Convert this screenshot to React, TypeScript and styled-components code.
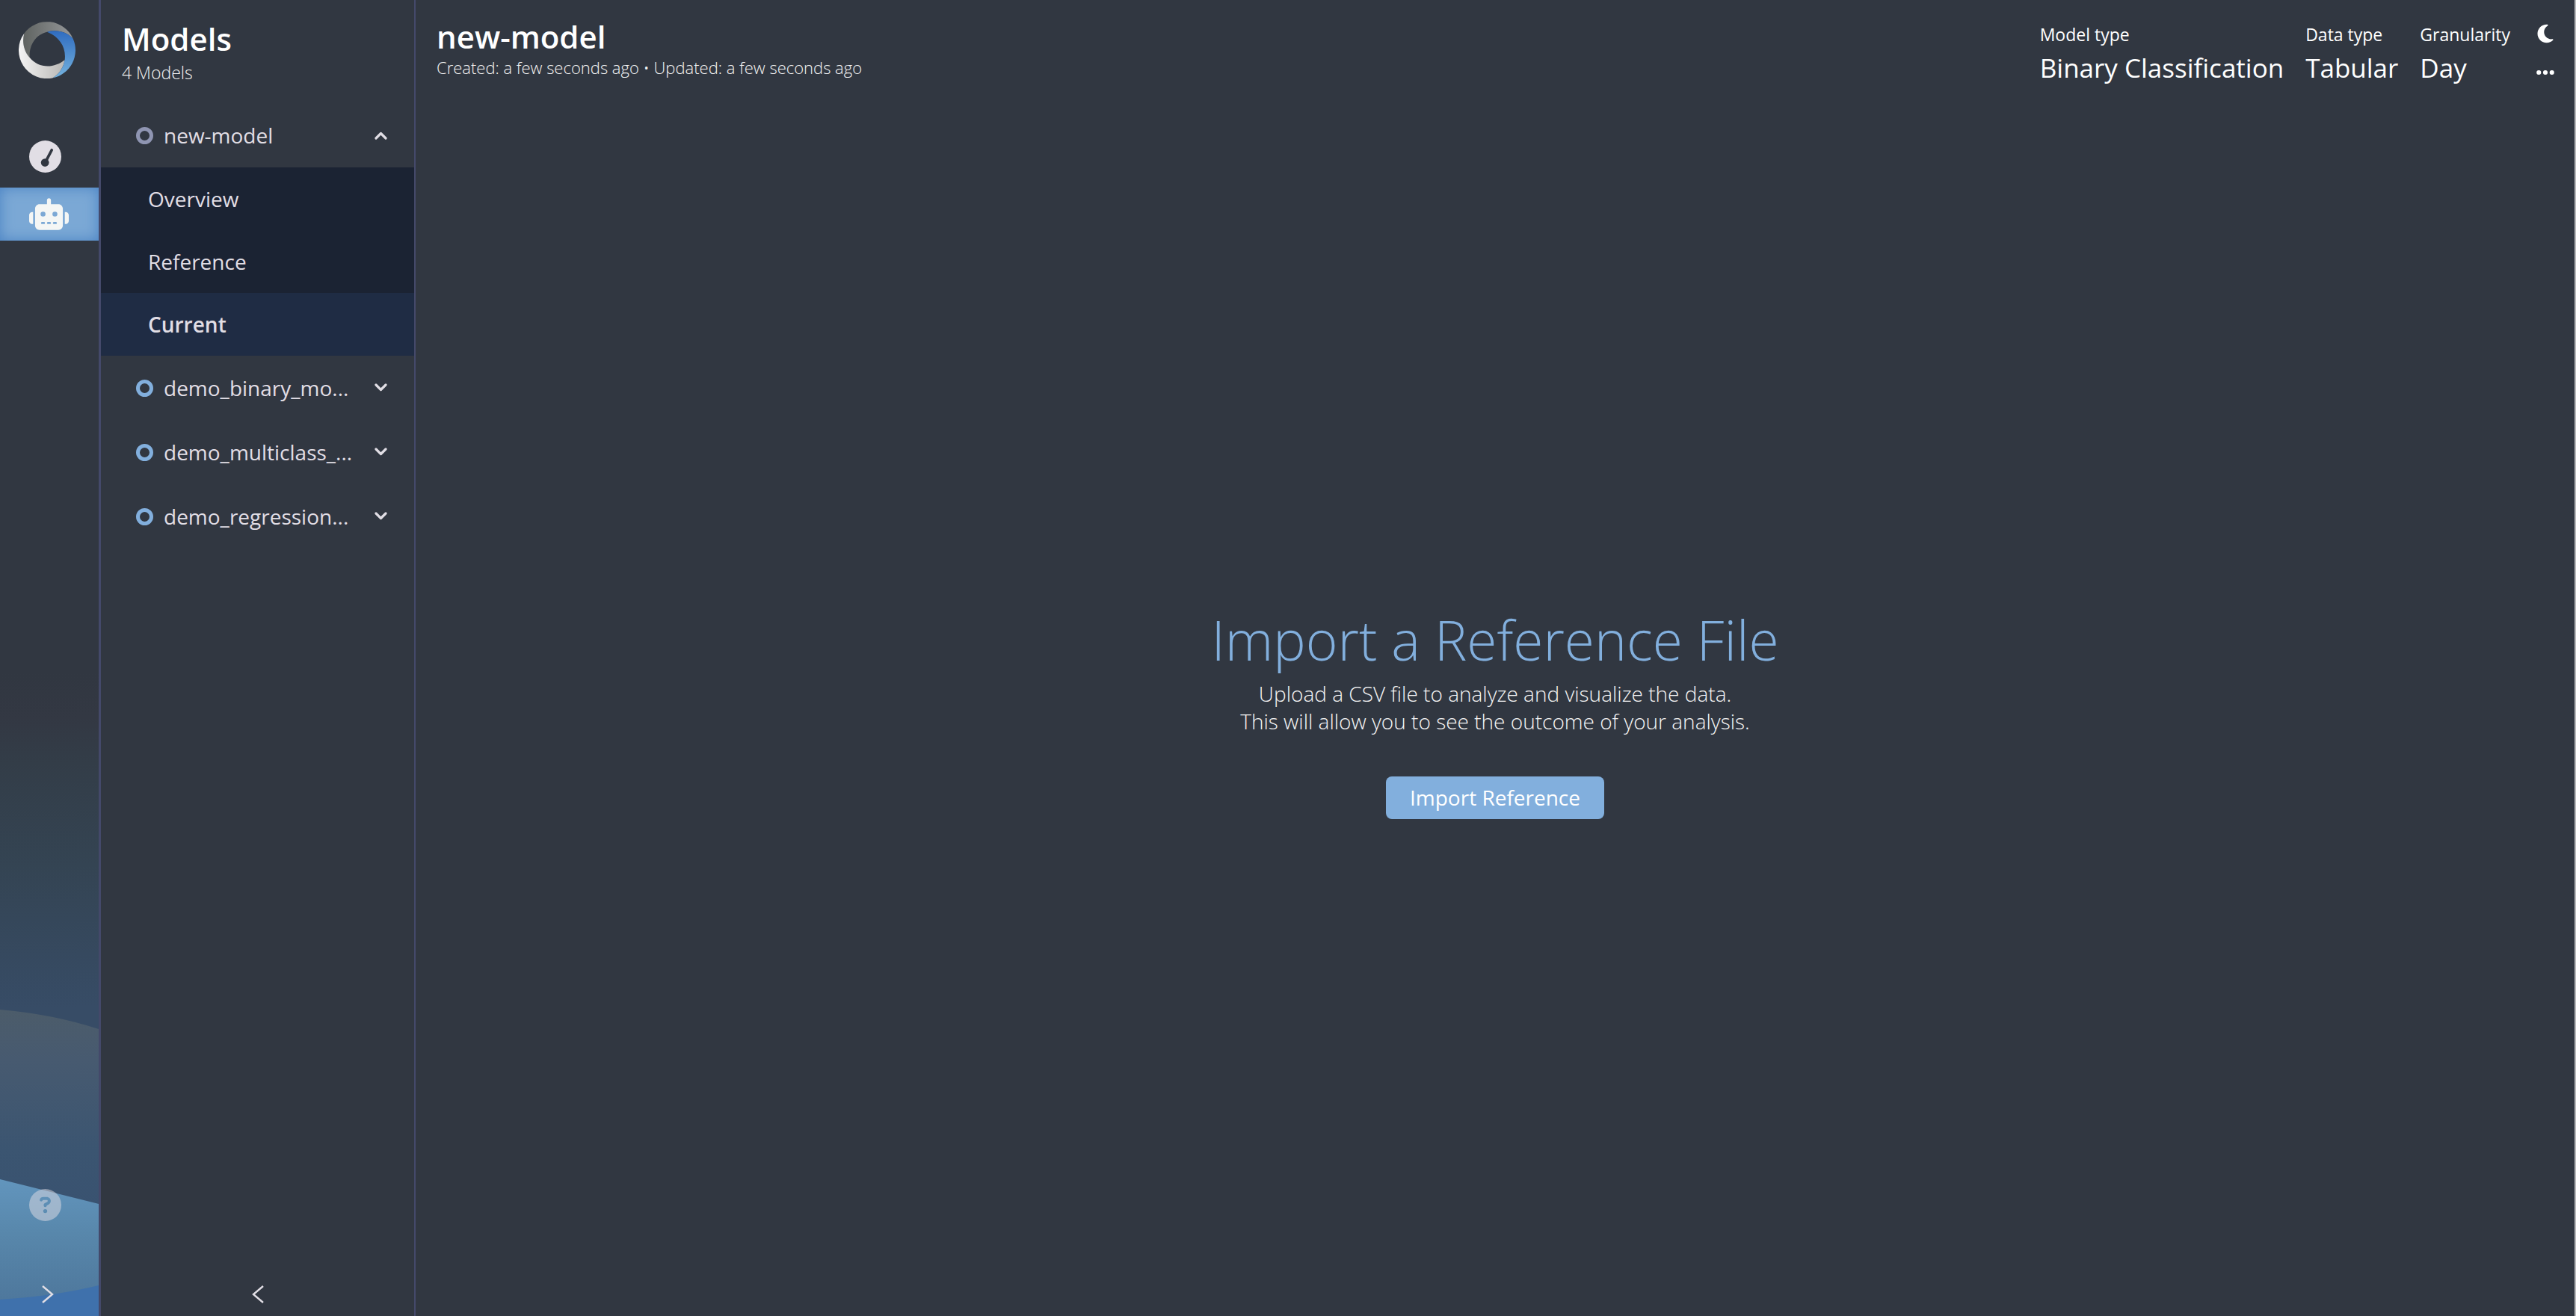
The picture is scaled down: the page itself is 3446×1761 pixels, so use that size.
import React, { useState } from 'react';
import styled, { createGlobalStyle } from 'styled-components';
import { FaCircleQuestion, FaEllipsis, FaMoon, FaRobot } from 'react-icons/fa6';

const color = {
  page: '#313741',
  line: '#44496a',
  submenu: '#1b2333',
  selected: '#1f2c44',
  accent: '#82afdd',
  text: '#e1dee5',
  soft: '#f4f4f4',
  muted: '#8f95b2',
  white: '#ffffff',
};

const GlobalStyle = createGlobalStyle`
  *, *::before, *::after { box-sizing: border-box; }
  body {
    margin: 0;
    background: ${color.page};
    color: ${color.text};
    font-family: "Open Sans", "Noto Sans", sans-serif;
    font-size: 28px;
    line-height: 37px;
  }
  h1, h2, p, ul, dl, dd { margin: 0; padding: 0; }
  ul { list-style: none; }
  button { font: inherit; color: inherit; background: none; border: 0; padding: 0; cursor: pointer; }
  a { color: inherit; text-decoration: none; }
  svg { display: block; }
`;

const Layout = styled.div`
  display: flex;
  min-height: 100vh;
  border-right: 2px solid #b9babc;
`;

const Rail = styled.nav`
  position: relative;
  isolation: isolate;
  display: flex;
  flex-direction: column;
  flex: none;
  width: 135px;
  border-right: 3px solid ${color.line};
`;

const RailArt = styled.svg`
  position: absolute;
  z-index: -1;
  left: 0;
  bottom: 0;
  width: 100%;
  height: 861px;
`;

const LogoLink = styled.a`
  padding: 29px 25px 0;
  height: 174px;
`;

const RailLink = styled.a<{ $active?: boolean; $dim?: boolean }>`
  display: flex;
  align-items: center;
  height: 71px;
  padding-left: 39px;
  color: ${(p) => (p.$active ? '#f4f6f5' : color.text)};
  background: ${(p) => (p.$active ? '#7ba8d5' : 'transparent')};
  box-shadow: ${(p) => (p.$active ? 'inset 0 0 18px #4a83c4' : 'none')};
  > svg { opacity: ${(p) => (p.$dim ? 0.5 : 1)}; }
`;

const RobotIcon = styled(FaRobot)`
  width: 53px;
  height: 43px;
`;

const RailLinks = styled.div`
  display: flex;
  flex-direction: column;
  gap: 6px;
`;

const RailBottom = styled.div`
  display: flex;
  flex-direction: column;
  gap: 55px;
  margin-top: auto;
`;

const CollapseButton = styled.button`
  display: flex;
  justify-content: center;
  align-items: center;
  height: 58px;
  width: 100%;
  color: ${color.text};
`;

const RailToggle = styled(CollapseButton)`
  padding-right: 4px;
`;

const Sidebar = styled.aside`
  display: flex;
  flex-direction: column;
  flex: none;
  width: 421px;
  border-right: 2px solid ${color.line};
`;

const SidebarHead = styled.header`
  height: 138px;
  padding: 26px 28px 0;
`;

const Title = styled.h2`
  font-size: 42px;
  font-weight: 600;
  line-height: 52px;
  color: ${color.white};
`;

const Count = styled.p`
  font-size: 23px;
  font-weight: 300;
  line-height: 38px;
  color: ${color.soft};
`;

const ModelRow = styled.button`
  display: flex;
  align-items: center;
  width: 100%;
  height: 86px;
  padding: 0 36px 0 47px;
  text-align: left;
`;

const Ring = styled.span<{ $muted?: boolean }>`
  flex: none;
  width: 23px;
  height: 23px;
  margin-right: 14px;
  border: 5px solid ${(p) => (p.$muted ? color.muted : color.accent)};
  border-radius: 50%;
`;

const ModelName = styled.span`
  flex: 1;
  white-space: nowrap;
`;

const SubLink = styled.a<{ $selected?: boolean }>`
  display: flex;
  align-items: center;
  height: 84px;
  padding-left: 63px;
  background: ${(p) => (p.$selected ? color.selected : color.submenu)};
  font-weight: ${(p) => (p.$selected ? 600 : 400)};
`;

const SidebarFoot = styled.footer`
  margin-top: auto;
`;

const Main = styled.main`
  display: flex;
  flex-direction: column;
  flex: 1;
  min-width: 0;
`;

const TopBar = styled.header`
  display: flex;
  justify-content: space-between;
  height: 146px;
  padding: 23px 25px 0 28px;
`;

const Dates = styled.p`
  font-size: 22px;
  font-weight: 300;
  line-height: 30px;
  color: ${color.soft};
`;

const Summary = styled.div`
  display: flex;
  gap: 33px;
  padding-top: 7px;
  color: ${color.white};
`;

const Facts = styled.dl`
  display: flex;
  gap: 29px;
`;

const Label = styled.dt`
  font-size: 23px;
  line-height: 32px;
`;

const Value = styled.dd`
  font-size: 35px;
  line-height: 58px;
`;

const Tools = styled.div`
  display: flex;
  flex-direction: column;
  align-items: center;
  gap: 26px;
  padding-top: 2px;
`;

const ToolButton = styled.button`
  display: flex;
  align-items: center;
  justify-content: center;
  height: 26px;
`;

const Empty = styled.section`
  display: flex;
  flex: 1;
  flex-direction: column;
  align-items: center;
  justify-content: center;
  text-align: center;
`;

const EmptyTitle = styled.h1`
  font-size: 73px;
  font-weight: 300;
  line-height: 88px;
  color: ${color.accent};
`;

const EmptyText = styled.p`
  margin: 10px 0 55px;
  font-weight: 300;
  color: ${color.soft};
`;

const ImportButton = styled.button`
  height: 57px;
  padding: 0 32px;
  border-radius: 8px;
  background: ${color.accent};
  color: ${color.white};
`;

const Logo = () => (
  <svg width="76" height="76" viewBox="31 27 228 228" aria-hidden="true">
    <defs>
      <linearGradient id="logoGrey" x1="0" x2="1">
        <stop offset="0" stopColor="#5f6361" />
        <stop offset="1" stopColor="#96989a" />
      </linearGradient>
      <linearGradient id="logoBlue" x1="0" y1="0" x2="0" y2="1">
        <stop offset="0" stopColor="#2f6cc0" />
        <stop offset="1" stopColor="#74b2de" />
      </linearGradient>
      <linearGradient id="logoWhite" x1="0" x2="1">
        <stop offset="0" stopColor="#f4f4f4" />
        <stop offset="1" stopColor="#b9b7b4" />
      </linearGradient>
    </defs>
    <path fill="url(#logoGrey)" d="M75 171C72 122 98 79 145 68C182 58 222 66 249 95A114 114 0 0 0 53 74C44 108 51 144 75 171Z" />
    <path fill="url(#logoWhite)" d="M53 74A114 114 0 0 0 168 253C192 238 210 214 216 180C174 215 111 216 75 171C51 144 44 108 53 74Z" />
    <path fill="url(#logoBlue)" d="M145 68C182 58 222 66 249 95A114 114 0 0 1 168 253C192 238 210 214 216 180C222 130 196 88 145 68Z" />
  </svg>
);

const Gauge = () => (
  <svg width="43" height="43" viewBox="0 0 128 128" aria-hidden="true">
    <circle cx="64" cy="64" r="64" fill="currentColor" />
    <circle cx="63" cy="88" r="16" fill={color.page} />
    <path d="M66 84L90 38" stroke={color.page} strokeWidth="11" strokeLinecap="round" />
  </svg>
);

const Caret = ({ up }: { up?: boolean }) => (
  <svg width="17" height="13" viewBox="0 0 17 13" fill="none" aria-hidden="true">
    <path
      d={up ? 'M2 10L8.5 3.5L15 10' : 'M2 2L8.5 8.5L15 2'}
      stroke="currentColor"
      strokeWidth="3.2"
      strokeLinecap="round"
      strokeLinejoin="round"
    />
  </svg>
);

const Angle = ({ left }: { left?: boolean }) => (
  <svg width="16" height="24" viewBox="0 0 16 24" fill="none" aria-hidden="true">
    <path d={left ? 'M15 1L2 12L15 23' : 'M1 1L14 12L1 23'} stroke="currentColor" strokeWidth="2.4" />
  </svg>
);

const Waves = () => (
  <RailArt viewBox="0 0 132 861" preserveAspectRatio="none" aria-hidden="true">
    <defs>
      <linearGradient id="dusk" x1="0" y1="0" x2="0" y2="1">
        <stop offset="0" stopColor="#313741" />
        <stop offset="0.07" stopColor="#333843" />
        <stop offset="0.14" stopColor="#333d48" />
        <stop offset="0.3" stopColor="#344453" />
        <stop offset="0.52" stopColor="#374c66" />
        <stop offset="1" stopColor="#374c66" />
      </linearGradient>
      <linearGradient id="hill" x1="0" y1="0" x2="0" y2="1">
        <stop offset="0" stopColor="#4c5c6a" />
        <stop offset="0.25" stopColor="#475a70" />
        <stop offset="0.7" stopColor="#3b5571" />
        <stop offset="1" stopColor="#395270" />
      </linearGradient>
      <linearGradient id="lake" x1="0" y1="0" x2="0" y2="1">
        <stop offset="0" stopColor="#6295bd" />
        <stop offset="0.4" stopColor="#5887ab" />
        <stop offset="1" stopColor="#4c7499" />
      </linearGradient>
    </defs>
    <rect width="132" height="861" fill="url(#dusk)" />
    <path d="M0 451Q70 457 132 477V720H0Z" fill="url(#hill)" />
    <path d="M0 678L132 711V861H0Z" fill="url(#lake)" />
    <path d="M0 839Q76 834 132 820V861H0Z" fill="#3f71ac" />
  </RailArt>
);

const demoModels = ['demo_binary_mo...', 'demo_multiclass_...', 'demo_regression...'];
const sections = ['Overview', 'Reference', 'Current'];
const facts = [
  ['Model type', 'Binary Classification'],
  ['Data type', 'Tabular'],
  ['Granularity', 'Day'],
];

export default function App() {
  const [open, setOpen] = useState(true);
  const [section, setSection] = useState('Current');

  return (
    <>
      <GlobalStyle />
      <Layout>
        <Rail aria-label="Primary">
          <Waves />
          <LogoLink href="#home" aria-label="Home"><Logo /></LogoLink>
          <RailLinks>
            <RailLink href="#dashboard" aria-label="Dashboard"><Gauge /></RailLink>
            <RailLink href="#models" aria-label="Models" $active><RobotIcon /></RailLink>
          </RailLinks>
          <RailBottom>
            <RailLink href="#help" aria-label="Help" $dim><FaCircleQuestion size={43} /></RailLink>
            <RailToggle type="button" aria-label="Expand navigation"><Angle /></RailToggle>
          </RailBottom>
        </Rail>

        <Sidebar>
          <SidebarHead>
            <Title>Models</Title>
            <Count>4 Models</Count>
          </SidebarHead>
          <ul>
            <li>
              <ModelRow type="button" aria-expanded={open} onClick={() => setOpen(!open)}>
                <Ring $muted />
                <ModelName>new-model</ModelName>
                <Caret up={open} />
              </ModelRow>
              {open && (
                <ul>
                  {sections.map((name) => (
                    <li key={name}>
                      <SubLink href={`#${name.toLowerCase()}`} $selected={name === section} onClick={() => setSection(name)}>
                        {name}
                      </SubLink>
                    </li>
                  ))}
                </ul>
              )}
            </li>
            {demoModels.map((name) => (
              <li key={name}>
                <ModelRow type="button" aria-expanded={false}>
                  <Ring />
                  <ModelName>{name}</ModelName>
                  <Caret />
                </ModelRow>
              </li>
            ))}
          </ul>
          <SidebarFoot>
            <CollapseButton type="button" aria-label="Collapse models"><Angle left /></CollapseButton>
          </SidebarFoot>
        </Sidebar>

        <Main>
          <TopBar>
            <div>
              <Title>new-model</Title>
              <Dates>Created: a few seconds ago • Updated: a few seconds ago</Dates>
            </div>
            <Summary>
              <Facts>
                {facts.map(([label, value]) => (
                  <div key={label}>
                    <Label>{label}</Label>
                    <Value>{value}</Value>
                  </div>
                ))}
              </Facts>
              <Tools>
                <ToolButton type="button" aria-label="Dark mode"><FaMoon size={28} /></ToolButton>
                <ToolButton type="button" aria-label="More actions"><FaEllipsis size={28} /></ToolButton>
              </Tools>
            </Summary>
          </TopBar>
          <Empty>
            <EmptyTitle>Import a Reference File</EmptyTitle>
            <EmptyText>
              Upload a CSV file to analyze and visualize the data.
              <br />
              This will allow you to see the outcome of your analysis.
            </EmptyText>
            <ImportButton type="button">Import Reference</ImportButton>
          </Empty>
        </Main>
      </Layout>
    </>
  );
}
